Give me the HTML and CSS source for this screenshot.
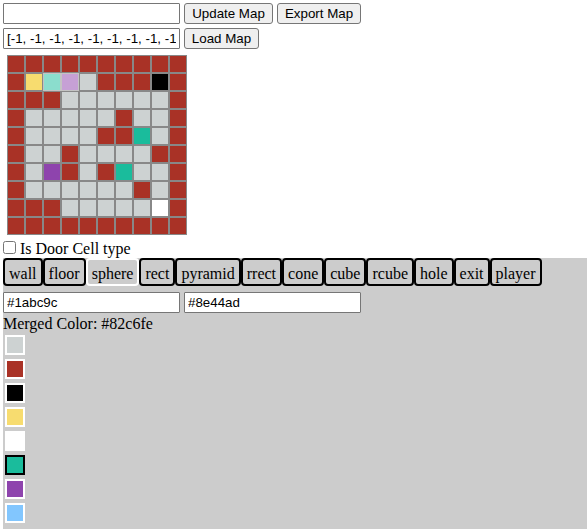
FILE: index.html
```html
<!DOCTYPE html>
<html lang="en">
<head>
<meta charset="utf-8">
<title>Map Editor</title>
<link rel="stylesheet" href="styles.css">
</head>
<body>
<div class="row">
  <input class="field" type="text">
  <button class="btn update">Update Map</button>
  <button class="btn export">Export Map</button>
</div>
<div class="row">
  <input class="field" type="text" value="[-1, -1, -1, -1, -1, -1, -1, -1, -1, -1, -1, -1]">
  <button class="btn load">Load Map</button>
</div>
<div class="map" id="map"></div>
<label class="door"><input type="checkbox"><span>Is Door Cell type</span></label>
<div class="panel">
  <div class="types">
    <div class="type">wall</div><div class="type">floor</div><div class="type selected">sphere</div><div class="type">rect</div><div class="type">pyramid</div><div class="type">rrect</div><div class="type">cone</div><div class="type">cube</div><div class="type">rcube</div><div class="type">hole</div><div class="type">exit</div><div class="type">player</div>
  </div>
  <div class="colors">
    <input class="field" type="text" value="#1abc9c">
    <input class="field" type="text" value="#8e44ad">
  </div>
  <div class="merged">Merged Color: #82c6fe</div>
  <div class="palette">
    <div class="swatch floor"></div>
    <div class="swatch wall"></div>
    <div class="swatch black"></div>
    <div class="swatch yellow"></div>
    <div class="swatch white"></div>
    <div class="swatch teal active"></div>
    <div class="swatch purple"></div>
    <div class="swatch blue"></div>
  </div>
</div>
<script src="map.js"></script>
</body>
</html>
```
FILE: styles.css
```css
* { box-sizing: border-box; }
body {
  margin: 0;
  padding: 3px 0 0 3px;
  height: 530px;
  overflow: hidden;
  background: #fff;
  color: #000;
  font: 16px/18px "Liberation Serif", "Times New Roman", serif;
}
.row, .colors { display: flex; gap: 4px; height: 21px; }
.row { margin-bottom: 4px; }
.field {
  width: 177px;
  height: 21px;
  margin: 0;
  padding: 1px 3px;
  border: 1px solid #767676;
  border-radius: 1px;
  background: #fff;
  color: #000;
  font: 13.333px "Liberation Sans", Arial, sans-serif;
}
.btn {
  height: 21px;
  margin: 0;
  padding: 0;
  border: 1px solid #767676;
  border-radius: 3px;
  background: #efefef;
  color: #000;
  font: 13.333px "Liberation Sans", Arial, sans-serif;
}
.update { width: 89px; }
.export { width: 84px; }
.load { width: 75px; }
.map {
  display: grid;
  grid-template-columns: repeat(10, 18px);
  grid-auto-rows: 18px;
  margin: 6px 0 0 4px;
}
.cell { border: 1px solid #888; }
.faded { opacity: .5; }
.door {
  display: flex;
  align-items: flex-start;
  gap: 4px;
  height: 18px;
  margin-top: 5px;
}
.door input { width: 13px; height: 13px; margin: 1px 0 0; }
.panel { height: 271px; background: #ccc; }
.types { display: flex; height: 28px; }
.type {
  flex: none;
  height: 28px;
  padding: 5px 4px 1px;
  border: 2px solid #000;
  border-radius: 4px;
}
.type.selected { border-color: #fff; }
.colors { margin-top: 6px; }
.merged { margin-top: 2px; }
.palette {
  display: flex;
  flex-direction: column;
  gap: 4px;
  padding: 2px;
}
.swatch { width: 20px; height: 20px; border: 2px solid #fff; }
.swatch.active { border-color: #000; }
.floor { background: #cdd2d2; }
.wall { background: #a93226; }
.black { background: #000; }
.yellow { background: #f7dc6f; }
.white { background: #fff; }
.teal { background: #1abc9c; }
.purple { background: #8e44ad; }
.blue { background: #82c6fe; }
```
FILE: map.js
```js
const kinds = {
  R: "wall", G: "floor", Y: "yellow", K: "black", W: "white",
  T: "teal", P: "purple", t: "teal faded", p: "purple faded"
};
const rows = [
  "RRRRRRRRRR",
  "RYtpGRRRKR",
  "RRRGGGGGGR",
  "RGGGGGRGGR",
  "RGGGGRRTGR",
  "RGGRGGGGRR",
  "RGPRGRTGGR",
  "RGGGGGGRGR",
  "RRRGGGGGWR",
  "RRRRRRRRRR"
];
const map = document.getElementById("map");
for (const key of rows.join("")) {
  const cell = document.createElement("div");
  cell.className = "cell " + kinds[key];
  map.appendChild(cell);
}
```
